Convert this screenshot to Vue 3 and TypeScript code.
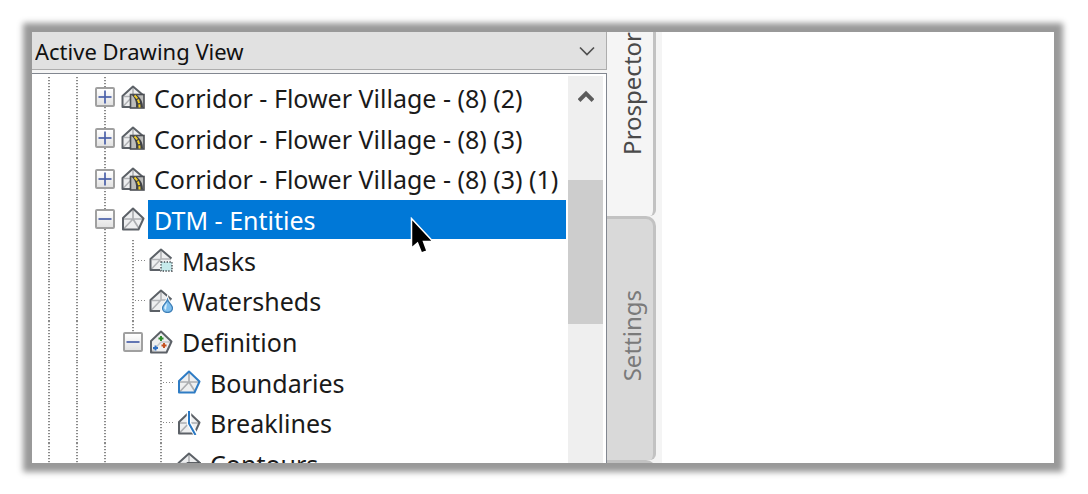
<script setup lang="ts">
import { ref } from 'vue'

type Badge = 'road' | 'plain' | 'mask' | 'drop' | 'points' | 'boundary' | 'breakline' | 'contour'
type Guide = 'line' | 'none'

interface Item {
  label: string
  badge: Badge
  guides: Guide[]
  toggle?: 'plus' | 'minus'
  last?: boolean
  selected?: boolean
}

const two: Guide[] = ['line', 'line']
const three: Guide[] = ['line', 'line', 'line']
const four: Guide[] = ['line', 'line', 'line', 'none']

const items: Item[] = [
  { label: 'Corridor - Flower Village - (8) (2)', badge: 'road', guides: two, toggle: 'plus' },
  { label: 'Corridor - Flower Village - (8) (3)', badge: 'road', guides: two, toggle: 'plus' },
  { label: 'Corridor - Flower Village - (8) (3) (1)', badge: 'road', guides: two, toggle: 'plus' },
  { label: 'DTM - Entities', badge: 'plain', guides: two, toggle: 'minus', selected: true },
  { label: 'Masks', badge: 'mask', guides: three },
  { label: 'Watersheds', badge: 'drop', guides: three },
  { label: 'Definition', badge: 'points', guides: three, toggle: 'minus', last: true },
  { label: 'Boundaries', badge: 'boundary', guides: four },
  { label: 'Breaklines', badge: 'breakline', guides: four },
  { label: 'Contours', badge: 'contour', guides: four },
]

const view = ref('Active Drawing View')
const tab = ref('Prospector')
</script>

<template>
  <main class="page">
    <section class="frame">
      <div class="side">
        <div class="picker">
          <select v-model="view" aria-label="View">
            <option>Active Drawing View</option>
          </select>
          <svg class="chevron" viewBox="0 0 16 10" aria-hidden="true">
            <path d="M1 1.500 8 8.500 15 1.500" fill="none" stroke="#505050" stroke-width="1.700" />
          </svg>
        </div>

        <div class="panel">
          <ul class="tree" role="tree">
            <li v-for="item in items" :key="item.label" class="row" role="treeitem" :aria-selected="!!item.selected">
              <span v-for="(g, i) in item.guides" :key="i" class="cell" :class="g" />
              <span class="cell line" :class="{ half: item.last }">
                <button v-if="item.toggle" class="toggle" :aria-label="'Toggle ' + item.label">
                  <svg viewBox="0 0 16 16">
                    <path d="M1.500 8h13" stroke="#4a60a8" stroke-width="1.700" />
                    <path v-if="item.toggle === 'plus'" d="M8 1.500v13" stroke="#4a60a8" stroke-width="1.700" />
                  </svg>
                </button>
                <span v-else class="branch" />
              </span>
              <svg class="icon" viewBox="0 0 24 24" aria-hidden="true">
                <template v-if="item.badge === 'plain' || item.badge === 'points' || item.badge === 'boundary' || item.badge === 'breakline'">
                  <path d="M12 1.500 22.500 11.500 17.500 22.500H2V11z" fill="#eeeff0" />
                  <path v-if="item.badge !== 'points'" d="M12 2V12M3 12h19M12 12 3 21.500M12 12l6 9.500" fill="none" stroke="#acaeb1" stroke-width="1.700" />
                  <path v-else d="M12 12 3 21.500M12 12h10" fill="none" stroke="#c4c6c8" stroke-width="1.500" />
                  <path
                    d="M12 1.500 22.500 11.500 17.500 22.500H2V11z"
                    fill="none"
                    :stroke="item.badge === 'boundary' ? '#2f7cc4' : '#5c6167'"
                    stroke-width="2"
                    stroke-linejoin="round"
                  />
                </template>
                <template v-else>
                  <path d="M12 1.500 22 10.500V22H1.500V11z" fill="#eeeff0" />
                  <path d="M12 2V11H22M3 11.500h9M2 21.500 12 11" fill="none" stroke="#b2b4b7" stroke-width="1.600" />
                  <path d="M22.500 10.500 12 1.500 1.500 11V22H11" fill="none" stroke="#5c6167" stroke-width="2" stroke-linejoin="round" />
                </template>

                <template v-if="item.badge === 'road'">
                  <rect x="9.500" y="9.500" width="13.500" height="13.500" fill="#bdbdbb" stroke="#4b4e53" stroke-width="1.600" />
                  <path d="M11 10h5q6 5 6 12.500h-7q1-7-4-12.500z" fill="#3f4145" />
                  <path d="M13.500 10.500q5 4 5 12" fill="none" stroke="#f3cf28" stroke-width="2" stroke-dasharray="4 1.200" />
                </template>
                <template v-else-if="item.badge === 'mask'">
                  <rect x="11" y="13" width="13" height="11" fill="#fff" />
                  <rect x="12" y="14" width="11" height="9" fill="#c7ebec" stroke="#43484d" stroke-width="1.400" stroke-dasharray="1.400 1.400" />
                </template>
                <template v-else-if="item.badge === 'drop'">
                  <path d="M18.500 10.500C17.500 14 13.500 16 13.500 19.500a5 4.500 0 0 0 10 0C23.500 16 19.500 14 18.500 10.500z" fill="#fff" stroke="#fff" stroke-width="3" />
                  <path d="M18.500 10.500C17.500 14 13.500 16 13.500 19a5 4.500 0 0 0 10 0C23.500 16 19.500 14 18.500 10.500z" fill="#7fbfee" stroke="#3f80b8" stroke-width="1.300" />
                  <path d="M18 14q-5 5-1 7z" fill="#d9effc" />
                </template>
                <template v-else-if="item.badge === 'points'">
                  <path d="M12 6v5M9.500 8.500h5" stroke="#2a8a28" stroke-width="1.900" />
                  <path d="M15 13v5M12.500 15.500h5" stroke="#c44f1c" stroke-width="1.900" />
                  <path d="M6.500 15.500v5M4 18h5" stroke="#2d6fc4" stroke-width="1.900" />
                </template>
                <template v-else-if="item.badge === 'breakline'">
                  <path d="M12 0V12.500L19 24" fill="none" stroke="#fff" stroke-width="4.500" />
                  <path d="M12 0V12.500L18.500 24" fill="none" stroke="#2878c4" stroke-width="2" />
                </template>
                <template v-else-if="item.badge === 'contour'">
                  <rect x="10.500" y="11" width="13" height="12" fill="#e9f6df" stroke="#45494e" stroke-width="1.600" />
                  <path d="M11 17q4-1 5-5M14 23q1-6 9-8" fill="none" stroke="#6fbf38" stroke-width="1.600" />
                </template>
              </svg>
              <span class="label" :class="{ selected: item.selected }">{{ item.label }}</span>
            </li>
          </ul>

          <div class="scroll">
            <button class="up" aria-label="Scroll up">
              <svg viewBox="0 0 16 14"><path d="M1 11.500 8 4.500 15 11.500" fill="none" stroke="#5c5c5c" stroke-width="4" /></svg>
            </button>
            <div class="thumb" />
          </div>
        </div>
      </div>

      <div class="tabs" role="tablist">
        <button class="tab first" role="tab" :aria-selected="tab === 'Prospector'" @click="tab = 'Prospector'">
          <span>Prospector</span>
        </button>
        <button class="tab" role="tab" :aria-selected="tab === 'Settings'" @click="tab = 'Settings'">
          <span>Settings</span>
        </button>
        <div class="tab next" />
      </div>

      <svg class="pointer" viewBox="0 0 28 38" aria-hidden="true">
        <path d="M1.500 1.500V31L7.500 26 11.500 36 17 34 13.500 24.500H23z" fill="#000" stroke="#fff" stroke-width="1.500" />
      </svg>
    </section>
  </main>
</template>

<style>
body {
  background: #fff;
}
</style>

<style scoped>
* {
  box-sizing: border-box;
}

.page {
  display: flex;
  height: 100vh;
  padding: 32px 34px 31px 32px;
  font-family: "Noto Sans", "Open Sans", sans-serif;
  color: #1a1a1a;
}

.frame {
  position: relative;
  display: flex;
  flex: 1;
  min-width: 0;
  background: #fff;
  box-shadow: 0 0 6px 9px #999;
}

button {
  margin: 0;
  padding: 0;
  border: 0;
  background: none;
  font: inherit;
}

.side {
  display: flex;
  flex-direction: column;
  gap: 3px;
  flex: 0 0 575px;
  overflow: hidden;
  background: #f5f5f5;
}

.picker {
  display: flex;
  align-items: center;
  flex: 0 0 38px;
  padding-right: 11px;
  border: solid #adadad;
  border-width: 0 1px 1px 0;
  background: #e1e1e1;
}

.picker select {
  flex: 1;
  height: 36px;
  padding: 0 0 0 3px;
  border: 0;
  background: none;
  appearance: none;
  font: inherit;
  font-size: 22px;
  color: #111;
}

.chevron {
  width: 16px;
  height: 10px;
}

.panel {
  display: flex;
  flex: 1;
  min-height: 0;
  padding-right: 3px;
  border: solid #828790;
  border-width: 1px 1px 0 0;
  background: #fff;
}

.tree {
  display: flex;
  flex-direction: column;
  flex: 1;
  height: 407px;
  margin: 3px 2px 0 0;
  padding: 0 0 0 3px;
  list-style: none;
}

.row {
  display: flex;
  align-items: center;
  flex: 1;
  min-height: 0;
}

.cell {
  display: flex;
  align-items: center;
  justify-content: center;
  align-self: stretch;
  flex: 0 0 28px;
}

.line {
  background: repeating-linear-gradient(#8a8a8a 0 1px, #e6e6e6 1px 2px, #fff 2px 3px) 13px 0 / 2px 100% no-repeat;
}

.line.half {
  background-size: 2px 50%;
}

.toggle {
  width: 20px;
  height: 20px;
  border: 2px solid #a0a0a0;
  border-radius: 2px;
  background: linear-gradient(#fff, #e2e2e2);
}

.toggle svg {
  display: block;
  width: 16px;
  height: 16px;
}

.branch {
  width: 12px;
  height: 1px;
  margin-left: 16px;
  background: repeating-linear-gradient(90deg, #888 0 1px, #fff 1px 3px);
}

.icon {
  flex: 0 0 24px;
  height: 24px;
  margin: 0 3px 0 2px;
}

.label {
  flex: 1;
  height: 39px;
  padding-left: 6px;
  font-size: 25px;
  line-height: 41px;
  white-space: nowrap;
}

.label.selected {
  background: #0078d7;
  color: #fff;
}

.scroll {
  flex: 0 0 35px;
  margin-top: 2px;
  background: #efefef;
}

.up {
  display: block;
  width: 35px;
  height: 40px;
}

.up svg {
  display: block;
  width: 16px;
  height: 14px;
  margin: 0 auto;
}

.thumb {
  height: 144px;
  margin-top: 64px;
  background: #cdcdcd;
}

.tabs {
  display: flex;
  flex-direction: column;
  flex: 0 0 55px;
  overflow: hidden;
  padding-right: 6px;
  background: #f4f4f4;
}

.tab {
  display: flex;
  align-items: flex-start;
  justify-content: center;
  flex: 0 0 244px;
  min-height: 0;
  border: 3px solid #c2c2c2;
  border-left-width: 0;
  border-bottom-width: 0;
  border-radius: 0 10px 6px 0;
  background: #d9d9d9;
  font-size: 24px;
  line-height: 36px;
  color: #7a7a7a;
}

.tab span {
  padding-top: 1px;
  margin: 71px 0 0 3px;
  writing-mode: vertical-rl;
  transform: rotate(180deg);
}

.tab.first {
  align-items: flex-end;
  flex-basis: 184px;
  border-top: 0;
  border-radius: 0 0 6px 0;
  background: #f5f5f5;
  color: #4a4a4a;
}

.tab.first span {
  margin: 0 0 60px 3px;
}

.pointer {
  position: absolute;
  left: 378px;
  top: 185px;
  width: 28px;
  height: 38px;
}
</style>
